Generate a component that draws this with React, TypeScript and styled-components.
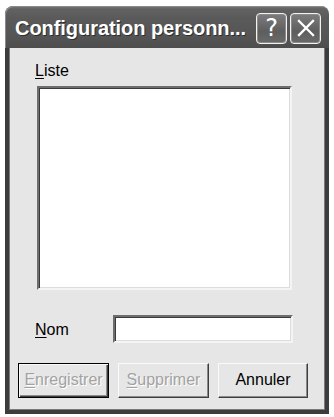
import React from "react";
import styled, { createGlobalStyle } from "styled-components";

const Global = createGlobalStyle`
  html, body { margin: 0; padding: 0; background: #ffffff; }
  body { font-family: "Liberation Sans", Arial, sans-serif; }
`;

const Window = styled.div`
  margin: 6px 0 0 5px;
  width: 324px;
`;

const TitleBar = styled.div`
  display: flex;
  align-items: center;
  height: 42px;
  box-sizing: border-box;
  padding: 2px 8px 0 10px;
  border-radius: 8px 8px 0 0;
  background: linear-gradient(180deg, #7a7a7a 0px, #626262 3px, #5a5a5a 12px, #555555 30px, #4d4d4d 42px);
  box-shadow: inset 1px 1px 0 #8a8a8a;
`;

const Title = styled.div`
  flex: 1;
  color: #ffffff;
  font-family: "Liberation Sans", Arial, sans-serif;
  font-weight: bold;
  font-size: 20px;
  letter-spacing: -0.05px;
  text-shadow: 1px 1px 0 #2e2e2e;
  white-space: nowrap;
`;

const CaptionButtons = styled.div`
  display: flex;
  gap: 3px;
`;

const CaptionButton = styled.div`
  width: 31px;
  height: 31px;
  box-sizing: border-box;
  border: 1px solid #f2f2f2;
  border-radius: 4px;
  background: linear-gradient(180deg, #7c7c7c, #5e5e5e 60%, #6a6a6a);
  box-shadow: inset 0 0 0 1px #8a8a8a;
  display: flex;
  align-items: center;
  justify-content: center;
  color: #ffffff;
  font-family: "DejaVu Sans", "Liberation Sans", sans-serif;
  font-weight: normal;
  font-size: 24px;
  line-height: 1;
`;

const Frame = styled.div`
  border: 4px solid #3c3c3c;
  border-top: none;
  background: #e6e6e6;
  box-shadow: inset 1px 0 0 #7a7a7a, inset -1px 0 0 #7a7a7a, inset 0 -1px 0 #7a7a7a;
  padding: 14px 0 12px 0;
  display: flex;
  flex-direction: column;
  font-family: "Liberation Sans", Arial, sans-serif;
  font-size: 16px;
  color: #000;
`;

const Label = styled.div`
  line-height: 18px;
  margin-left: 26px;
`;

const Key = styled.span`
  text-decoration: underline;
  text-underline-offset: 2px;
`;

const Sunken = styled.div<{ $w: number; $h: number }>`
  width: ${(p) => p.$w}px;
  height: ${(p) => p.$h}px;
  box-sizing: border-box;
  background: #ffffff;
  border-top: 2px solid #6e6e6e;
  border-left: 2px solid #6e6e6e;
  border-bottom: 2px solid #f4f4f4;
  border-right: 2px solid #f4f4f4;
  box-shadow: inset 1px 1px 0 #3a3a3a, inset -1px -1px 0 #dcdcdc;
`;

const ListBox = styled(Sunken)`
  margin: 6px 0 0 28px;
`;

const NameRow = styled.div`
  display: flex;
  align-items: center;
  margin-top: 25px;
  padding-left: 26px;
`;

const NameLabel = styled(Label)`
  margin-left: 0;
  width: 78px;
  padding-top: 2px;
`;

const ButtonRow = styled.div`
  display: flex;
  gap: 9px;
  margin-top: 20px;
  padding-left: 9px;
`;

const Button = styled.div<{ $w: number; $default?: boolean; $disabled?: boolean }>`
  width: ${(p) => p.$w}px;
  height: 35px;
  box-sizing: border-box;
  display: flex;
  align-items: center;
  justify-content: center;
  background: #e6e6e6;
  border: 1px solid ${(p) => (p.$default ? "#000" : "#fafafa")};
  border-right-color: ${(p) => (p.$default ? "#000" : "#3e3e3e")};
  border-bottom-color: ${(p) => (p.$default ? "#000" : "#3e3e3e")};
  box-shadow: ${(p) =>
    p.$default
      ? "inset 1px 1px 0 #fafafa, inset -1px -1px 0 #3e3e3e, inset -2px -2px 0 #8a8a8a"
      : "inset -1px -1px 0 #8a8a8a"};
  color: ${(p) => (p.$disabled ? "#a2a2a2" : "#000")};
  text-shadow: ${(p) => (p.$disabled ? "1px 1px 0 #ffffff" : "none")};
  font-size: 16px;
  padding-bottom: 1px;
`;

export default function App() {
  return (
    <>
      <Global />
      <Window>
        <TitleBar>
          <Title>Configuration personn...</Title>
          <CaptionButtons>
            <CaptionButton>?</CaptionButton>
            <CaptionButton>
              <svg width="20" height="20" viewBox="0 0 20 20">
                <path d="M3 3 L17 17 M17 3 L3 17" stroke="#fff" strokeWidth="2.3" strokeLinecap="square" />
              </svg>
            </CaptionButton>
          </CaptionButtons>
        </TitleBar>
        <Frame>
          <Label>
            <Key>L</Key>iste
          </Label>
          <ListBox $w={255} $h={204} />
          <NameRow>
            <NameLabel>
              <Key>N</Key>om
            </NameLabel>
            <Sunken $w={180} $h={28} />
          </NameRow>
          <ButtonRow>
            <Button $w={91} $default $disabled>
              <span>
                <Key>E</Key>nregistrer
              </span>
            </Button>
            <Button $w={91} $disabled>
              <span>
                <Key>S</Key>upprimer
              </span>
            </Button>
            <Button $w={90}>Annuler</Button>
          </ButtonRow>
        </Frame>
      </Window>
    </>
  );
}
